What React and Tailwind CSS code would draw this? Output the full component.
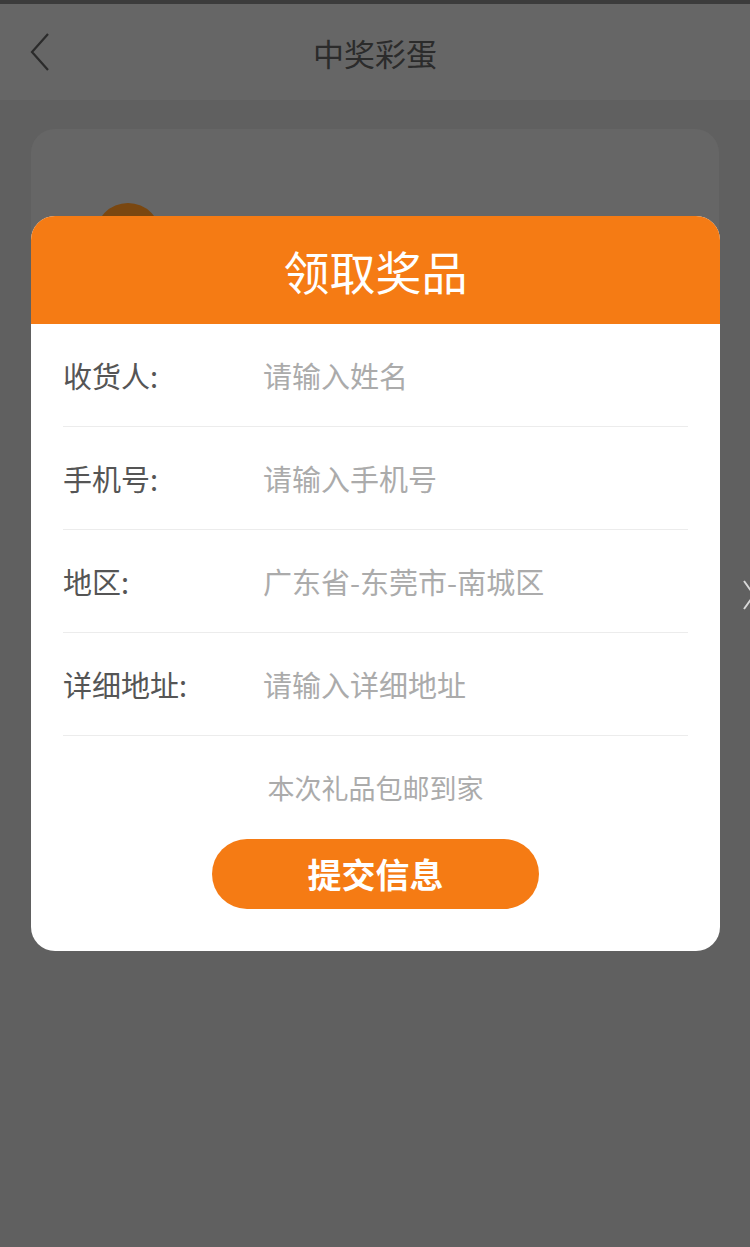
import React from "react";

const font = { fontFamily: '"Noto Sans CJK SC", "Noto Sans", sans-serif' };

function Row({ label, value }) {
  return (
    <div className="flex h-[103px] items-center border-b border-[#ececec]">
      <div className="w-[200px] text-[29px] leading-none text-[#555555]">{label}</div>
      <div className="text-[29px] leading-none text-[#ababab]">{value}</div>
    </div>
  );
}

export default function App() {
  return (
    <div className="relative h-[1247px] w-[750px] overflow-hidden bg-[#606060]" style={font}>
      <div className="h-[4px] bg-[#3c3c3c]" />
      <div className="relative flex h-[96px] items-center justify-center bg-[#666666]">
        <svg className="absolute left-[28px] top-[28px]" width="24" height="40" viewBox="0 0 24 40">
          <path d="M20 2 L4 20 L20 38" fill="none" stroke="#2b2b2b" strokeWidth="2.2" />
        </svg>
        <span className="text-[31px] leading-none text-[#2b2b2b]">中奖彩蛋</span>
      </div>
      <div className="mx-[31px] mt-[29px] h-[800px] rounded-[24px] bg-[#666666] px-[64px] pt-[74px]">
        <div className="h-[66px] w-[66px] rounded-full bg-[#7a4710]" />
      </div>
      <svg className="absolute left-[740px] top-[578px]" width="16" height="34" viewBox="0 0 16 34">
        <path d="M4 3 L14 17 L4 31" fill="none" stroke="#d8d8d8" strokeWidth="2" />
      </svg>

      <div className="absolute left-[31px] top-[216px] w-[689px] overflow-hidden rounded-[24px] bg-white">
        <div className="flex h-[108px] items-center justify-center bg-[#f57b14]">
          <span className="text-[46px] leading-none text-white">领取奖品</span>
        </div>
        <div className="mx-[32px]">
          <Row label="收货人:" value="请输入姓名" />
          <Row label="手机号:" value="请输入手机号" />
          <Row label="地区:" value="广东省-东莞市-南城区" />
          <Row label="详细地址:" value="请输入详细地址" />
        </div>
        <div className="flex flex-col items-center pb-[42px] pt-[32px]">
          <div className="text-[27px] leading-[40px] text-[#ababab]">本次礼品包邮到家</div>
          <button className="mt-[31px] flex h-[70px] w-[327px] items-center justify-center rounded-full bg-[#f57b14] text-[34px] font-bold leading-none text-white">
            提交信息
          </button>
        </div>
      </div>
    </div>
  );
}
